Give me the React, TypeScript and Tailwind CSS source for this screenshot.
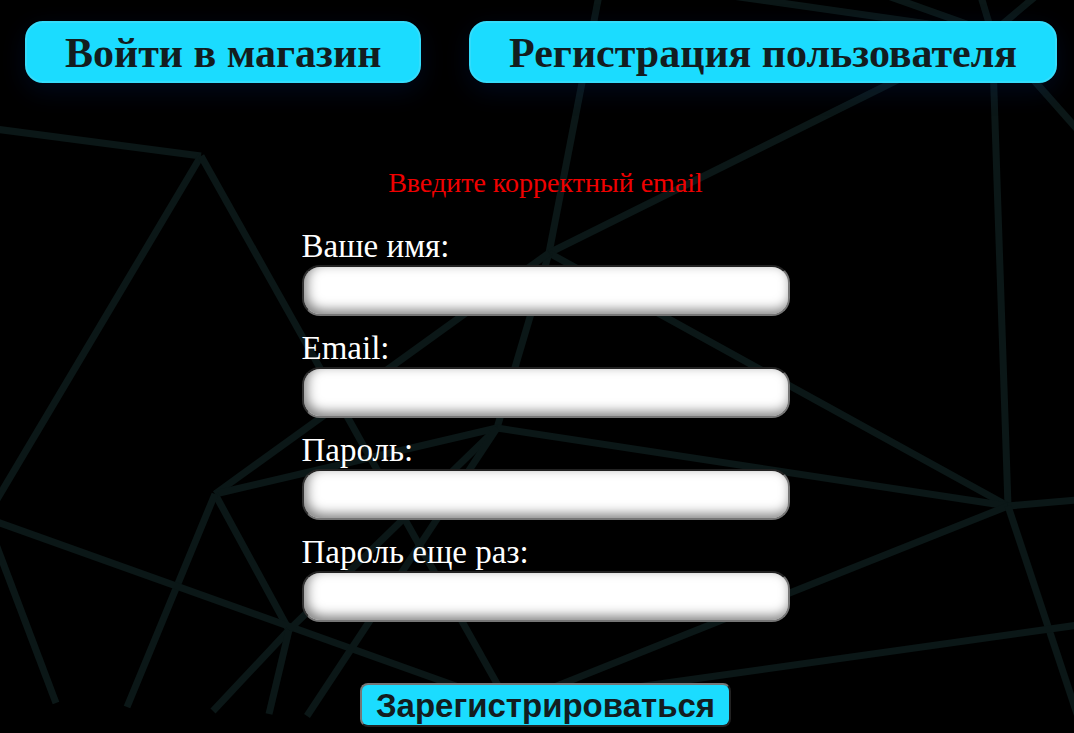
import type { FormEvent } from "react";

type Point = [number, number];

const top: Point = [992, 33];
const left: Point = [201, 156];
const center: Point = [549, 253];
const middle: Point = [497, 428];
const right: Point = [1008, 506];
const lowerLeft: Point = [215, 494];
const crossing: Point = [289, 630];
const outer: Point = [-14, 518];
const bottom: Point = [509, 705];

const edges: [Point, Point][] = [
  [[-20, 127], left],
  [left, outer],
  [left, bottom],
  [[600, -10], center],
  [center, top],
  [[690, -10], top],
  [[871, -10], top],
  [[979, -10], top],
  [[1043, -10], top],
  [top, [1100, 155]],
  [top, right],
  [center, right],
  [center, middle],
  [center, lowerLeft],
  [lowerLeft, middle],
  [middle, right],
  [lowerLeft, crossing],
  [lowerLeft, [127, 707]],
  [outer, bottom],
  [outer, [56, 703]],
  [crossing, middle],
  [middle, [307, 716]],
  [crossing, [213, 711]],
  [crossing, [269, 714]],
  [right, bottom],
  [right, [1100, 498]],
  [right, [1079, 720]],
  [bottom, [1100, 622]],
];

const fields = [
  { id: "name", label: "Ваше имя:", type: "text" },
  { id: "email", label: "Email:", type: "text" },
  { id: "password", label: "Пароль:", type: "password" },
  { id: "password-repeat", label: "Пароль еще раз:", type: "password" },
];

function Web() {
  return (
    <svg
      className="absolute inset-0 -z-10 h-full w-full"
      viewBox="0 0 1074 733"
      preserveAspectRatio="xMidYMin slice"
      aria-hidden="true"
    >
      <g stroke="#0b1717" strokeWidth="7">
        {edges.map(([a, b], i) => (
          <line key={i} x1={a[0]} y1={a[1]} x2={b[0]} y2={b[1]} />
        ))}
      </g>
    </svg>
  );
}

function NavLink({ href, children }: { href: string; children: string }) {
  return (
    <a
      href={href}
      className="flex h-[62px] items-center whitespace-nowrap rounded-[18px] border-2 border-[#34dcfb] bg-[#1bdcff] px-[38px] pt-[2px] text-[42px] leading-none font-bold text-[#131d20] shadow-[0_8px_26px_rgba(0,45,140,0.2)]"
    >
      {children}
    </a>
  );
}

export default function App() {
  const submit = (e: FormEvent) => e.preventDefault();

  return (
    <div className="relative isolate min-h-screen overflow-hidden bg-black pb-[6px] font-['Liberation_Serif',serif] text-white">
      <Web />
      <nav className="flex justify-between gap-4 pt-[21px] pr-[17px] pl-[25px]">
        <NavLink href="#login">Войти в магазин</NavLink>
        <NavLink href="#register">Регистрация пользователя</NavLink>
      </nav>
      <form onSubmit={submit} className="mt-[84px] ml-[17px] flex flex-col items-center">
        <p role="alert" className="text-[28px] leading-8 text-[#f00000]">
          Введите корректный email
        </p>
        <div className="mt-[29px] flex w-[488px] max-w-full flex-col gap-[14px]">
          {fields.map((field) => (
            <div key={field.id} className="flex flex-col">
              <label htmlFor={field.id} className="text-[33px] leading-[37px]">
                {field.label}
              </label>
              <input
                id={field.id}
                type={field.type}
                className="h-[51px] w-full rounded-[18px] border-2 border-t-[#222] border-r-[#767676] border-b-[#767676] border-l-[#333] bg-white px-4 text-2xl text-black shadow-[inset_3px_-4px_12px_rgba(0,0,0,0.5)] outline-none"
              />
            </div>
          ))}
        </div>
        <button
          type="submit"
          className="mt-[61px] flex h-[44px] items-center rounded-[8px] border-2 border-t-[#767676] border-r-[#222] border-b-[#222] border-l-[#767676] bg-[#1bdcff] px-[14px] font-['Liberation_Sans',sans-serif] text-[33px] leading-none font-bold text-[#131d20]"
        >
          Зарегистрироваться
        </button>
      </form>
    </div>
  );
}
